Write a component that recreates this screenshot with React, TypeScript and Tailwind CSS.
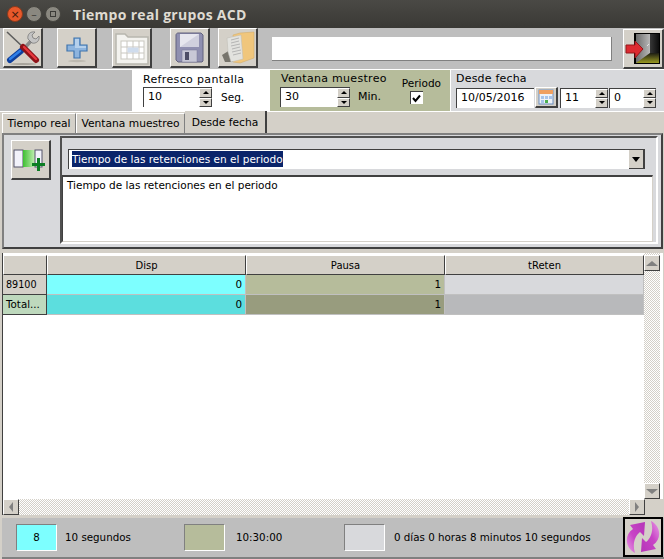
import React from 'react';

const font = { fontFamily: '"DejaVu Sans", sans-serif' };

const btn = 'flex items-center justify-center bg-[#d4d0c8] border-t border-l border-t-white border-l-white border-r-2 border-b-2 border-r-[#404040] border-b-[#404040]';
const checker = 'bg-[repeating-conic-gradient(#d4d0c8_0_25%,#ffffff_0_50%)] bg-[length:2px_2px]';

function ToolsIcon() {
  return (
    <svg width="37" height="37" viewBox="1 1 37 37">
      <ellipse cx="20" cy="36" rx="13" ry="1" fill="#a8a49c" />
      <path d="M17 25L28 13" stroke="#8a8a8a" strokeWidth="3.4" />
      <path d="M25 11c-1-4 2-8 7-7l-3 3 1 3 3 1 3-3c1 5-3 8-7 7z" fill="#c4c4c4" stroke="#6e6e6e" strokeWidth="0.7" />
      <path d="M7 32L18 23" stroke="#0f3f9c" strokeWidth="6" strokeLinecap="round" />
      <path d="M7 31L17 23" stroke="#2f7fe8" strokeWidth="2.4" strokeLinecap="round" />
      <path d="M4 4L21 20" stroke="#5c5c5c" strokeWidth="1.6" />
      <path d="M20 19L33 32" stroke="#8e1218" strokeWidth="6" strokeLinecap="round" />
      <path d="M21 19L33 31" stroke="#e8383e" strokeWidth="2.4" strokeLinecap="round" />
    </svg>
  );
}

function PlusIcon() {
  return (
    <svg width="37" height="37" viewBox="1 1 37 37">
      <ellipse cx="20" cy="33" rx="9" ry="1.2" fill="#bdb9b0" />
      <path d="M17 10h6v7h7v6h-7v7h-6v-7h-7v-6h7z" fill="#8db4de" stroke="#3f74ad" strokeWidth="1.2" />
      <path d="M18 11h4v7h7v2H18z" fill="#b5d0ec" />
    </svg>
  );
}

function CalendarIcon() {
  return (
    <svg width="37" height="37" viewBox="1 1 37 37">
      <path d="M4 6h9l3 3h20v27H4z" fill="#f3f2ee" stroke="#b8b6ae" strokeWidth="1.5" />
      <rect x="9" y="13" width="23" height="18" fill="#fff" stroke="#c9c7c0" />
      <path d="M9 19h23M9 25h23M15 13v18M21 13v18M27 13v18" stroke="#c9c7c0" />
      <rect x="15.5" y="19.5" width="11" height="5" fill="#cfdced" />
    </svg>
  );
}

function SaveIcon() {
  return (
    <svg width="37" height="37" viewBox="1 1 37 37">
      <path d="M6 7c0-1 1-2 2-2h23l2 2v26l-1 1H8l-2-2z" fill="#8f8fb0" stroke="#62627e" />
      <rect x="10" y="6" width="19" height="13" fill="#e6e6ee" />
      <path d="M10 19L29 6v13z" fill="#d0d0de" />
      <rect x="12" y="22" width="15" height="12" fill="#c8c8d6" stroke="#7a7a96" strokeWidth="0.5" />
      <rect x="15" y="24" width="4" height="8" fill="#4e4e66" />
    </svg>
  );
}

function FolderIcon() {
  return (
    <svg width="37" height="37" viewBox="1 1 37 37">
      <path d="M4 27l8-5 3 12H7z" fill="#77746c" />
      <path d="M15 7l7-2 14-1v26l-14 5-7-1z" fill="#f0c67c" stroke="#d0a964" strokeWidth="0.5" />
      <path d="M9 10l14-3 2 24-12 3-3-10z" fill="#e2e2de" stroke="#bcbab2" strokeWidth="0.5" />
      <path d="M13 12l8-2M13 15l8-2M13 18l9-2M14 21l8-2M14 24l9-2M15 27l8-2" stroke="#a8a8a8" strokeWidth="0.8" />
    </svg>
  );
}

function ExitIcon() {
  return (
    <svg width="37" height="37" viewBox="2 2 37 37">
      <defs>
        <linearGradient id="lf" x1="0" y1="0" x2="1" y2="0">
          <stop offset="0" stopColor="#6c6c6c" />
          <stop offset="1" stopColor="#b8b8b8" />
        </linearGradient>
        <linearGradient id="bk" x1="0" y1="0" x2="1" y2="0">
          <stop offset="0" stopColor="#3c3c3c" />
          <stop offset="1" stopColor="#0c0c0c" />
        </linearGradient>
        <linearGradient id="fl" x1="0" y1="0" x2="0" y2="1">
          <stop offset="0" stopColor="#1c1c14" />
          <stop offset="1" stopColor="#9a9a20" />
        </linearGradient>
      </defs>
      <rect x="11" y="5" width="26" height="31" fill="#000" />
      <rect x="26" y="6" width="10" height="24" fill="url(#bk)" />
      <path d="M13 34l13-9h10v10H13z" fill="url(#fl)" />
      <path d="M13 6h14v19L13 35z" fill="url(#lf)" />
      <path d="M24 18l2-2" stroke="#f0f0f0" strokeWidth="0.8" />
      <path d="M3 17h9v-4l8 8-8 9v-5H3z" fill="#dc2a30" stroke="#94161b" />
    </svg>
  );
}

function AddColumnIcon() {
  return (
    <svg width="37" height="37" viewBox="1 1 37 37">
      <defs>
        <linearGradient id="gc" x1="0" y1="0" x2="1" y2="0">
          <stop offset="0" stopColor="#3fbf33" />
          <stop offset="1" stopColor="#c4f0b4" />
        </linearGradient>
      </defs>
      <rect x="3" y="10" width="9" height="17" fill="#f2f2fa" stroke="#55556a" />
      <rect x="12" y="10" width="12" height="17" fill="url(#gc)" />
      <rect x="24" y="10" width="7" height="17" fill="#f2f2fa" stroke="#55556a" />
      <path d="M26 18h3v5h5v3h-5v5h-3v-5h-5v-3h5z" fill="#0b7d22" />
    </svg>
  );
}

function RefreshIcon() {
  const arrow = 'M13 37C3 32 2 19 11 13L8 9l15-3-1 14-4-4c-5 4-8 12-5 21z';
  return (
    <svg width="36" height="36" viewBox="3 3 36 36">
      <defs>
        <linearGradient id="mg" x1="0" y1="1" x2="1" y2="0">
          <stop offset="0" stopColor="#e9a0e6" />
          <stop offset="0.45" stopColor="#c843c6" />
          <stop offset="1" stopColor="#b535b8" />
        </linearGradient>
      </defs>
      <path d={arrow} fill="url(#mg)" />
      <path d={arrow} fill="url(#mg)" transform="rotate(180 21 21)" />
    </svg>
  );
}

function ToolButton({ className, children }: { className: string; children: React.ReactNode }) {
  return <div className={`${btn} ${className}`}>{children}</div>;
}

function Spin({ value, w, shown = true }: { value: string; w: string; shown?: boolean }) {
  return (
    <div className={`flex h-[20px] bg-white border-t border-l border-[#404040] ${w}`}>
      <span className="flex-1 pl-[4px] text-[11px] leading-[18px] text-black">{value}</span>
      {shown && (
        <div className="flex flex-col w-[13px] ml-auto bg-[#d4d0c8]">
          <div className="flex-1 flex items-center justify-center border border-b-[#404040] border-r-[#404040] border-t-white border-l-white">
            <span className="w-0 h-0 border-x-[3px] border-x-transparent border-b-[3px] border-b-black" />
          </div>
          <div className="flex-1 flex items-center justify-center border border-b-[#404040] border-r-[#404040] border-t-white border-l-white">
            <span className="w-0 h-0 border-x-[3px] border-x-transparent border-t-[3px] border-t-black" />
          </div>
        </div>
      )}
    </div>
  );
}

function Tab({ label, active, w }: { label: string; active?: boolean; w: string }) {
  return active ? (
    <div className={`h-[22px] -mt-[1px] bg-[#d4d0c8] border-r-2 border-r-[#404040] text-center text-[10.7px] leading-[24px] ${w}`}>{label}</div>
  ) : (
    <div className={`h-[21px] mt-[1px] bg-[#d4d0c8] border-l border-t border-r border-white border-r-[#808080] text-center text-[10.7px] leading-[20px] ${w}`}>{label}</div>
  );
}

function Arrow({ dir }: { dir: 'up' | 'down' | 'left' | 'right' }) {
  const cls = {
    up: 'border-x-[6px] border-x-transparent border-b-[5px] border-b-[#808080]',
    down: 'border-x-[6px] border-x-transparent border-t-[5px] border-t-[#808080]',
    left: 'border-y-[5px] border-y-transparent border-r-[4px] border-r-[#808080]',
    right: 'border-y-[5px] border-y-transparent border-l-[4px] border-l-[#808080]',
  }[dir];
  return (
    <div className="flex items-center justify-center w-[16px] h-[16px] bg-[#d4d0c8] border-t border-l border-t-white border-l-white border-r border-b border-r-[#404040] border-b-[#404040]">
      <span className={`w-0 h-0 ${cls}`} />
    </div>
  );
}

const cell = 'h-[20px] border-b border-r border-b-[#c0c0c0] border-r-[#c0c0c0] pr-[3px] text-right text-[10.3px] leading-[19px] text-black';
const head = 'h-[20px] bg-[#d4d0c8] border-b border-r border-b-[#404040] border-r-[#404040] border-t border-l border-t-white border-l-white text-center text-[10px] leading-[20px]';

export default function App() {
  return (
    <div className="w-[664px] h-[559px] overflow-hidden bg-[#d4d0c8] text-black flex flex-col" style={font}>
      {/* title bar */}
      <div className="flex h-[28px] shrink-0 items-center bg-gradient-to-b from-[#4a4945] to-[#3a3935] pl-[7px]">
        <div className="flex gap-[3px]">
          <span className="flex items-center justify-center w-[16px] h-[16px] rounded-full bg-[#e8582a] border border-[#8a3a1c] text-[11px] leading-none text-[#3c1a0c]">×</span>
          <span className="flex items-center justify-center w-[16px] h-[16px] rounded-full bg-[#8a8880] border border-[#45443f] text-[11px] leading-none text-[#3c3b37]">–</span>
          <span className="flex items-center justify-center w-[16px] h-[16px] rounded-full bg-[#8a8880] border border-[#45443f]">
            <span className="w-[6px] h-[6px] border border-[#3c3b37]" />
          </span>
        </div>
        <span className="ml-[12px] text-[14px] font-bold tracking-[0.3px] text-[#dfdbd2]" style={{ fontFamily: '"Open Sans", sans-serif' }}>
          Tiempo real grupos ACD
        </span>
      </div>

      {/* toolbar */}
      <div className="flex h-[41px] shrink-0 bg-[#bebebe] pl-[3px]">
        <ToolButton className="w-[40px] h-[40px]"><ToolsIcon /></ToolButton>
        <ToolButton className="w-[40px] h-[40px] ml-[14px]"><PlusIcon /></ToolButton>
        <ToolButton className="w-[40px] h-[40px] ml-[15px]"><CalendarIcon /></ToolButton>
        <ToolButton className="w-[40px] h-[40px] ml-[18px]"><SaveIcon /></ToolButton>
        <ToolButton className="w-[40px] h-[40px] ml-[8px]"><FolderIcon /></ToolButton>
        <div className="w-[340px] h-[24px] mt-[9px] ml-[14px] bg-white border-b border-r border-[#808080]" />
        <ToolButton className="w-[41px] h-[40px] ml-[11px] mt-[1px]"><ExitIcon /></ToolButton>
      </div>

      {/* options */}
      <div className="flex h-[42px] shrink-0 text-[11px] border-t border-white">
        <div className="w-[132px] bg-[#bebebe]" />
        <div className="w-[138px] bg-white pl-[11px]">
          <div className="leading-[13px] mt-[3px] tracking-[0.35px]">Refresco pantalla</div>
          <div className="flex items-center mt-[1px]">
            <Spin value="10" w="w-[69px]" />
            <span className="ml-[9px] mt-[1px] text-[10.5px]">Seg.</span>
          </div>
        </div>
        <div className="flex w-[181px] bg-[#b6bc9b] border-r border-white pl-[10px]">
          <div>
            <div className="ml-[1px] leading-[13px] mt-[2px] tracking-[0.3px]">Ventana muestreo</div>
            <div className="flex items-center mt-[2px]">
              <Spin value="30" w="w-[70px]" />
              <span className="ml-[8px]">Min.</span>
            </div>
          </div>
          <div className="ml-auto mr-[9px] mt-[6px] flex flex-col">
            <span className="leading-[14px] text-[10.5px]">Periodo</span>
            <span className="mt-[1px] ml-[8px] flex items-center justify-center w-[13px] h-[13px] bg-white border-t border-l border-[#404040]">
              <svg width="9" height="9" viewBox="0 0 9 9"><path d="M1 4l2.5 3L8 1.5" fill="none" stroke="#000" strokeWidth="2" /></svg>
            </span>
          </div>
        </div>
        <div className="flex-1 bg-[#d8d9dc] pl-[5px]">
          <div className="leading-[13px] mt-[2px] tracking-[0.2px]">Desde fecha</div>
          <div className="flex items-center mt-[2px]">
            <Spin value="10/05/2016" w="w-[78px]" shown={false} />
            <div className={`${btn} w-[23px] h-[21px] ml-[1px]`}>
              <svg width="16" height="16" viewBox="0 0 16 16">
                <rect x="1" y="1" width="14" height="14" fill="#eef2f8" stroke="#6d8fc0" />
                <rect x="1" y="1" width="14" height="4" fill="#f0a060" />
                <path d="M3 7h3v3H3zM7 7h3v3H7zM11 7h3v3h-3z" fill="#a8c4ea" />
                <path d="M7 11h3v3H7z" fill="#4caf50" />
                <path d="M3 11h3v3H3z" fill="#a8c4ea" />
              </svg>
            </div>
            <div className="ml-[2px]"><Spin value="11" w="w-[48px]" /></div>
            <div className="ml-[1px]"><Spin value="0" w="w-[47px]" /></div>
          </div>
        </div>
      </div>

      {/* tabs */}
      <div className="flex h-[22px] shrink-0 pl-[2px] bg-[#d4d0c8] border-t border-white">
        <Tab label="Tiempo real" w="w-[74px]" />
        <Tab label="Ventana muestreo" w="w-[109px]" />
        <Tab label="Desde fecha" active w="w-[82px]" />
      </div>

      {/* panel */}
      <div className="flex h-[116px] shrink-0 ml-[2px] mr-[1px] bg-[#d8d9dc] border-2 border-t-[#808080] border-l-[#808080] border-r-[#404040] border-b-[#404040]">
        <div className="w-[56px] pl-[7px] pt-[5px]">
          <ToolButton className="w-[40px] h-[40px]"><AddColumnIcon /></ToolButton>
        </div>
        <div className="flex-1 flex flex-col mr-[3px] mt-[1px] mb-[3px] border-t-2 border-l-2 border-t-[#505050] border-l-[#505050] border-r-2 border-b-2 border-r-white border-b-white">
          <div className="flex h-[20px] mt-[11px] ml-[6px] mr-[11px] bg-white border-t border-l border-[#404040]">
            <span className="ml-[3px] mt-[1px] h-[16px] text-[10.5px] leading-[16px] bg-[#0a246a] text-white">Tiempo de las retenciones en el periodo</span>
            <div className="ml-auto w-[16px] bg-[#d4d0c8] flex items-center justify-center border-r-2 border-b border-[#404040]">
              <span className="w-0 h-0 border-x-[4px] border-x-transparent border-t-[5px] border-t-black" />
            </div>
          </div>
          <div className="flex-1 mt-[6px] mr-[3px] bg-white border-t-2 border-l border-[#404040] border-r border-r-[#d4d0c8] border-b border-b-[#d4d0c8] pl-[4px] text-[10.5px] leading-[16px]">
            Tiempo de las retenciones en el periodo
          </div>
        </div>
      </div>

      {/* grid */}
      <div className="flex flex-col h-[263px] shrink-0 mt-[3px] ml-[2px] mr-[1px] bg-white border-t border-[#d4d0c8]">
        <div className="flex flex-1 min-h-0">
          <div className="w-[642px] pt-[2px] border-l border-[#404040]">
            <div className="grid grid-cols-[44px_199px_199px_199px]">
              <div className={head} />
              <div className={head}>Disp</div>
              <div className={head}>Pausa</div>
              <div className={head}>tReten</div>

              <div className="h-[20px] bg-[#d4d0c8] border-b border-r border-[#404040] pl-[3px] text-[9.6px] leading-[19px]">89100</div>
              <div className={`${cell} bg-[#7dffff]`}>0</div>
              <div className={`${cell} bg-[#b6bc9b]`}>1</div>
              <div className={`${cell} bg-[#d8d9dc]`} />

              <div className="h-[20px] bg-[#bed9bd] border-b border-r border-[#404040] pl-[3px] text-[10.3px] leading-[19px]">Total...</div>
              <div className={`${cell} bg-[#5cdede]`}>0</div>
              <div className={`${cell} bg-[#989c7e]`}>1</div>
              <div className={`${cell} bg-[#b8b9bb]`} />
            </div>
          </div>
          <div className={`flex flex-col justify-between w-[16px] pt-[2px] ${checker}`}>
            <Arrow dir="up" />
            <Arrow dir="down" />
          </div>
        </div>
        <div className="flex h-[16px] shrink-0 border-l border-[#404040]">
          <Arrow dir="left" />
          <div className={`flex-1 ${checker}`} />
          <Arrow dir="right" />
          <div className="w-[18px] bg-[#d4d0c8]" />
        </div>
      </div>

      {/* footer */}
      <div className="flex items-center h-[41px] shrink-0 mt-[3px] ml-[2px] bg-[#bebebe] text-[10.3px] border-b-2 border-[#808080]">
        <div className="flex items-center justify-center w-[41px] h-[27px] ml-[14px] bg-[#7dffff] border border-white border-t-[#808080] border-l-[#808080]">8</div>
        <span className="w-[127px] pl-[8px]">10 segundos</span>
        <div className="w-[41px] h-[27px] bg-[#b6bc9b] border border-white border-t-[#808080] border-l-[#808080]" />
        <span className="w-[119px] pl-[11px]">10:30:00</span>
        <div className="w-[41px] h-[27px] bg-[#d8d9dc] border border-white border-t-[#808080] border-l-[#808080]" />
        <span className="ml-[9px]">0 días 0 horas 8 minutos 10 segundos</span>
        <div className="flex items-center justify-center self-start -mt-[1px] w-[40px] h-[40px] ml-auto mr-[1px] bg-[#d4d0c8] border-2 border-black shrink-0">
          <RefreshIcon />
        </div>
      </div>
    </div>
  );
}
